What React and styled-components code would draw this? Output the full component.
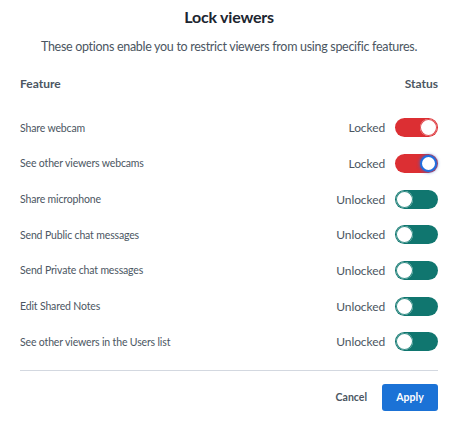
import React, { useState } from "react";
import styled, { createGlobalStyle } from "styled-components";

const GlobalStyle = createGlobalStyle`
  body {
    margin: 0;
    background: #ffffff;
    font-family: Lato, "Open Sans", "Liberation Sans", sans-serif;
  }
`;

const Modal = styled.div`
  width: 460px;
  height: 424px;
  box-sizing: border-box;
  padding: 6px 22px 0 20px;
  display: flex;
  flex-direction: column;
`;

const Title = styled.h2`
  margin: 0;
  text-align: center;
  font-size: 16px;
  font-weight: 700;
  letter-spacing: -0.2px;
  line-height: 22px;
  color: #1c2530;
`;

const Subtitle = styled.p`
  margin: 9px 0 0;
  text-align: center;
  white-space: nowrap;
  font-size: 12.5px;
  letter-spacing: -0.3px;
  line-height: 20px;
  color: #4b5662;
`;

const HeaderRow = styled.div`
  display: flex;
  justify-content: space-between;
  align-items: center;
  margin-top: 17px;
  height: 18px;
  font-size: 12px;
  font-weight: 700;
  color: #4b5662;
`;

const List = styled.div`
  margin-top: 18px;
  display: flex;
  flex-direction: column;
`;

const Row = styled.div`
  display: flex;
  align-items: center;
  justify-content: space-between;
  height: 35.67px;
`;

const Label = styled.span`
  font-size: 10.5px;
  letter-spacing: -0.15px;
  color: #4b5662;
`;

const StatusCell = styled.div`
  display: flex;
  align-items: center;
  gap: 10px;
`;

const StatusText = styled.span`
  font-size: 12px;
  letter-spacing: -0.1px;
  color: #4b5662;
`;

const Track = styled.button`
  position: relative;
  width: 43px;
  height: 19px;
  padding: 0;
  border: none;
  border-radius: 10px;
  cursor: pointer;
  background: ${(p) => (p.$on ? "#dc2f33" : "#10766f")};
`;

const Knob = styled.span`
  position: absolute;
  top: 1px;
  left: ${(p) => (p.$on ? "25px" : "1px")};
  width: 17px;
  height: 17px;
  box-sizing: border-box;
  border-radius: 50%;
  background: #ffffff;
  border: ${(p) => (p.$focus ? "2px solid #1f6fe0" : "none")};
  box-shadow: ${(p) =>
    p.$focus
      ? "0 0 3px 1px rgba(31, 111, 224, 0.55)"
      : p.$on
      ? "inset 0 0 0 1px #e04c50"
      : "inset 0 0 0 1px #2d8a82"};
`;

const Divider = styled.hr`
  margin: 10px 0 0;
  border: none;
  border-top: 1px solid #d3d8e0;
`;

const Footer = styled.div`
  display: flex;
  justify-content: flex-end;
  align-items: center;
  gap: 15px;
  margin-top: 13px;
`;

const CancelButton = styled.button`
  border: none;
  background: none;
  padding: 0;
  font-family: inherit;
  font-size: 10.5px;
  font-weight: 700;
  color: #4b5662;
  cursor: pointer;
`;

const ApplyButton = styled.button`
  width: 56px;
  height: 27px;
  padding: 0;
  border: none;
  border-radius: 3px;
  background: #1b72d6;
  color: #ffffff;
  font-family: inherit;
  font-size: 10.5px;
  font-weight: 700;
  cursor: pointer;
`;

const features = [
  { label: "Share webcam", locked: true },
  { label: "See other viewers webcams", locked: true, focus: true },
  { label: "Share microphone", locked: false },
  { label: "Send Public chat messages", locked: false },
  { label: "Send Private chat messages", locked: false },
  { label: "Edit Shared Notes", locked: false },
  { label: "See other viewers in the Users list", locked: false },
];

const App = () => {
  const [items, setItems] = useState(features);

  const toggle = (i) =>
    setItems((prev) =>
      prev.map((f, idx) => (idx === i ? { ...f, locked: !f.locked } : f))
    );

  return (
    <>
      <GlobalStyle />
      <Modal>
        <Title>Lock viewers</Title>
        <Subtitle>
          These options enable you to restrict viewers from using specific
          features.
        </Subtitle>
        <HeaderRow>
          <span>Feature</span>
          <span>Status</span>
        </HeaderRow>
        <List>
          {items.map((f, i) => (
            <Row key={f.label}>
              <Label>{f.label}</Label>
              <StatusCell>
                <StatusText>{f.locked ? "Locked" : "Unlocked"}</StatusText>
                <Track $on={f.locked} onClick={() => toggle(i)}>
                  <Knob $on={f.locked} $focus={f.focus} />
                </Track>
              </StatusCell>
            </Row>
          ))}
        </List>
        <Divider />
        <Footer>
          <CancelButton>Cancel</CancelButton>
          <ApplyButton>Apply</ApplyButton>
        </Footer>
      </Modal>
    </>
  );
};

export default App;
